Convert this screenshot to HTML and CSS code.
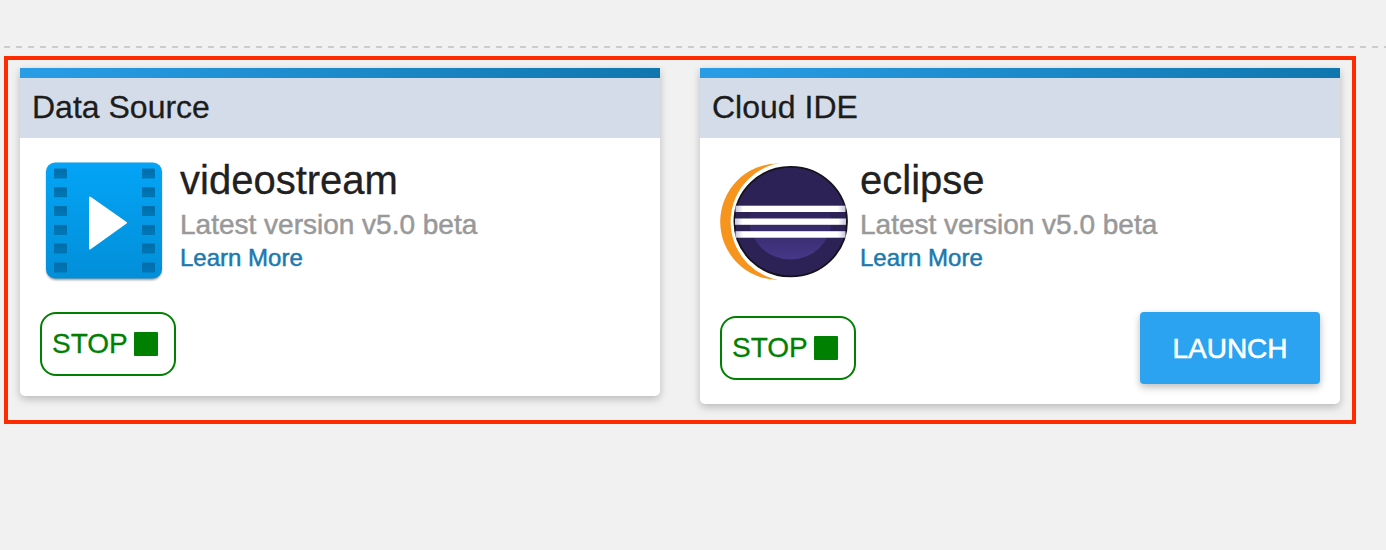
FILE: index.html
```html
<!DOCTYPE html>
<html lang="en">
<head>
<meta charset="utf-8">
<title>Services</title>
<link rel="stylesheet" href="styles.css">
</head>
<body>
<div class="divider"></div>
<main class="frame">
  <section class="card">
    <h2 class="card-title">Data Source</h2>
    <div class="info">
      <svg class="logo" viewBox="0 0 140 128" width="140" height="128">
        <defs>
          <linearGradient id="film" x1="0" y1="0" x2="0" y2="1"><stop offset="0" stop-color="#04a4f6"/><stop offset="1" stop-color="#028fd9"/></linearGradient>
          <linearGradient id="hole" x1="0" y1="0" x2="0" y2="1"><stop offset="0" stop-color="#006da8"/><stop offset="1" stop-color="#0078b9"/></linearGradient>
          <filter id="soft" x="-10%" y="-10%" width="120%" height="120%"><feGaussianBlur stdDeviation="1.2"/></filter>
        </defs>
        <rect x="6.5" y="8" width="115" height="116" rx="9" fill="#000" opacity=".4" filter="url(#soft)"/>
        <rect x="6" y="6.500" width="116" height="116" rx="9" fill="url(#film)"/>
        <g fill="url(#hole)" stroke="#006aa3" stroke-width=".7">
          <rect x="14.500" y="13" width="12" height="9"/><rect x="14.500" y="31.800" width="12" height="9"/><rect x="14.500" y="50.500" width="12" height="9"/><rect x="14.500" y="69.300" width="12" height="9"/><rect x="14.500" y="88" width="12" height="9"/><rect x="14.500" y="107" width="12" height="9"/>
          <rect x="102.500" y="13" width="12" height="9"/><rect x="102.500" y="31.800" width="12" height="9"/><rect x="102.500" y="50.500" width="12" height="9"/><rect x="102.500" y="69.300" width="12" height="9"/><rect x="102.500" y="88" width="12" height="9"/><rect x="102.500" y="107" width="12" height="9"/>
        </g>
        <path d="M50 41.500V92.500L86 66.800Z" fill="#fff" stroke="#fff" stroke-width="2" stroke-linejoin="round"/>
      </svg>
      <div class="details">
        <h3 class="name">videostream</h3>
        <p class="version">Latest version v5.0 beta</p>
        <a class="more">Learn More</a>
      </div>
    </div>
    <div class="actions">
      <button class="stop">STOP<span class="square"></span></button>
    </div>
  </section>
  <section class="card">
    <h2 class="card-title">Cloud IDE</h2>
    <div class="info">
      <svg class="logo" viewBox="0 0 140 128" width="140" height="128">
        <defs>
          <linearGradient id="glow" x1="0" y1="0" x2="0" y2="1"><stop offset=".3" stop-color="#2c2255"/><stop offset="1" stop-color="#473788"/></linearGradient>
          <linearGradient id="stripe"><stop offset="0" stop-color="#c9c6da"/><stop offset=".07" stop-color="#fff"/><stop offset=".93" stop-color="#fff"/><stop offset="1" stop-color="#c9c6da"/></linearGradient>
        </defs>
        <circle cx="58.500" cy="65.700" r="58.300" fill="#f7941e"/>
        <circle cx="70.300" cy="65.700" r="59.700" fill="#fff"/>
        <ellipse cx="70.700" cy="65.600" rx="56.300" ry="54.800" fill="#2c2255" stroke="#15121e" stroke-width="1.800"/>
        <ellipse cx="70.500" cy="64" rx="41" ry="39.500" fill="url(#glow)"/>
        <g fill="url(#stripe)"><rect x="15.500" y="49.700" width="110" height="6.300"/><rect x="15" y="62.500" width="111" height="6.300"/><rect x="15.500" y="75.200" width="110" height="6.500"/></g>
      </svg>
      <div class="details">
        <h3 class="name">eclipse</h3>
        <p class="version">Latest version v5.0 beta</p>
        <a class="more">Learn More</a>
      </div>
    </div>
    <div class="actions">
      <button class="stop">STOP<span class="square"></span></button>
      <button class="launch">LAUNCH</button>
    </div>
  </section>
</main>
</body>
</html>
```
FILE: styles.css
```css
* { box-sizing: border-box; }
body {
  margin: 0;
  padding: 46px 0 0 4px;
  background: #f1f1f1;
  color: #212121;
  font-family: "Liberation Sans", Arial, sans-serif;
}
h2, h3, p { margin: 0; font-weight: 400; }
.divider {
  height: 2px;
  background: repeating-linear-gradient(90deg, #ccc 0 6px, transparent 6px 12px);
}
.frame {
  display: flex;
  align-items: flex-start;
  gap: 40px;
  width: 1352px;
  height: 368px;
  margin-top: 8px;
  padding: 8px 12px;
  border: 4px solid #ff2a00;
}
.card {
  width: 640px;
  border-radius: 0 0 5px 5px;
  background: #fff;
  box-shadow: 0 4px 10px rgba(0, 0, 0, .14), 0 2px 7px rgba(0, 0, 0, .1);
}
.card::before {
  content: "";
  display: block;
  height: 10px;
  background: linear-gradient(90deg, #289de6, #1077ae);
}
.card-title {
  height: 60px;
  padding-left: 12px;
  background: #d4dcea;
  color: #1c1c1c;
  font-size: 32px;
  line-height: 58px;
  -webkit-text-stroke: .3px #1c1c1c;
}
.info { display: flex; align-items: flex-start; padding: 18px 20px 0; }
.logo { flex: none; }
.name { font-size: 40px; line-height: 48px; -webkit-text-stroke: .3px #212121; }
.version {
  color: #999;
  font-size: 28px;
  line-height: 42px;
  -webkit-text-stroke: .5px #999;
}
.more {
  display: block;
  color: #1b79ae;
  font-size: 24px;
  line-height: 23px;
  -webkit-text-stroke: .5px #1b79ae;
}
.actions {
  display: flex;
  align-items: center;
  justify-content: space-between;
  padding: 30px 20px 20px;
}
.info { height: 144px; }
button { font: 28px "Liberation Sans", Arial, sans-serif; }
.stop {
  display: flex;
  align-items: center;
  gap: 6px;
  width: 136px;
  height: 64px;
  padding: 0 0 0 10px;
  border: 2px solid #008000;
  border-radius: 16px;
  background: #fff;
  color: #008000;
  line-height: 62px;
  -webkit-text-stroke: .3px #008000;
}
.square { width: 24px; height: 24px; border-radius: 1px; background: #008000; }
.launch {
  width: 180px;
  height: 72px;
  padding: 2px 0 0;
  border: 0;
  border-radius: 4px;
  background: #2ba3f1;
  color: #fff;
  line-height: 70px;
  box-shadow: 0 4px 8px rgba(0, 0, 0, .16), 0 2px 6px rgba(0, 0, 0, .12);
  -webkit-text-stroke: .6px #fff;
}
```
